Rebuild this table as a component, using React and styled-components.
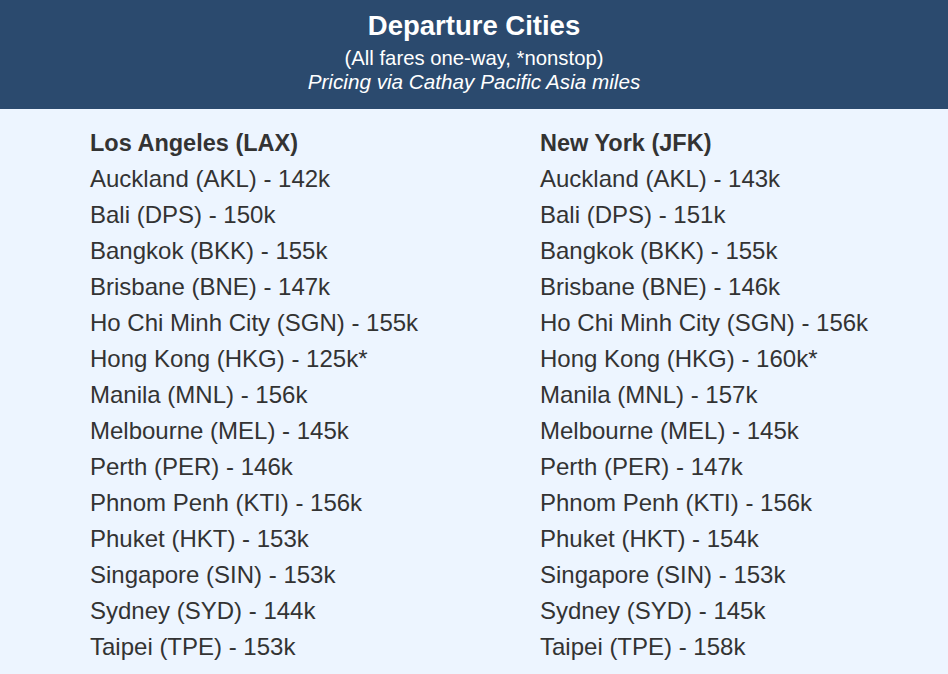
import React from 'react';
import styled, { createGlobalStyle } from 'styled-components';

const departures = [
  {
    id: 'lax',
    city: 'Los Angeles (LAX)',
    fares: [
      'Auckland (AKL) - 142k',
      'Bali (DPS) - 150k',
      'Bangkok (BKK) - 155k',
      'Brisbane (BNE) - 147k',
      'Ho Chi Minh City (SGN) - 155k',
      'Hong Kong (HKG) - 125k*',
      'Manila (MNL) - 156k',
      'Melbourne (MEL) - 145k',
      'Perth (PER) - 146k',
      'Phnom Penh (KTI) - 156k',
      'Phuket (HKT) - 153k',
      'Singapore (SIN) - 153k',
      'Sydney (SYD) - 144k',
      'Taipei (TPE) - 153k',
    ],
  },
  {
    id: 'jfk',
    city: 'New York (JFK)',
    fares: [
      'Auckland (AKL) - 143k',
      'Bali (DPS) - 151k',
      'Bangkok (BKK) - 155k',
      'Brisbane (BNE) - 146k',
      'Ho Chi Minh City (SGN) - 156k',
      'Hong Kong (HKG) - 160k*',
      'Manila (MNL) - 157k',
      'Melbourne (MEL) - 145k',
      'Perth (PER) - 147k',
      'Phnom Penh (KTI) - 156k',
      'Phuket (HKT) - 154k',
      'Singapore (SIN) - 153k',
      'Sydney (SYD) - 145k',
      'Taipei (TPE) - 158k',
    ],
  },
];

const App = () => {
  return (
    <>
      <GlobalStyle />
      <Page>
        <Header>
          <Title>Departure Cities</Title>
          <Subtitle>(All fares one-way, *nonstop)</Subtitle>
          <Subtitle italic>Pricing via Cathay Pacific Asia miles</Subtitle>
        </Header>

        <Columns>
          {departures.map((dep) => (
            <Column key={dep.id}>
              <CityHeading>{dep.city}</CityHeading>
              {dep.fares.map((fare) => (
                <FareRow key={fare}>{fare}</FareRow>
              ))}
            </Column>
          ))}
        </Columns>
      </Page>
    </>
  );
};

export default App;

const GlobalStyle = createGlobalStyle`
  html, body {
    margin: 0;
    padding: 0;
    background-color: #edf5ff;
  }
`;

const Page = styled.div`
  font-family: 'Liberation Sans', Arial, sans-serif;
  width: 948px;
  min-height: 674px;
  background-color: #edf5ff;
  color: #333333;
`;

const Header = styled.header`
  background-color: #2b4a6e;
  color: #ffffff;
  text-align: center;
  padding: 6px 0 15px;
`;

const Title = styled.h1`
  margin: 0;
  font-size: 27.5px;
  line-height: 40px;
  font-weight: 700;
`;

const Subtitle = styled.div`
  font-size: ${(p) => (p.italic ? '20.7px' : '20.3px')};
  line-height: 24px;
  font-style: ${(p) => (p.italic ? 'italic' : 'normal')};
`;

const Columns = styled.div`
  display: grid;
  grid-template-columns: 450px 450px;
  padding: 16px 0 0 90px;
`;

const Column = styled.div`
  display: flex;
  flex-direction: column;
`;

const CityHeading = styled.div`
  font-size: 23.5px;
  line-height: 36px;
  font-weight: 700;
`;

const FareRow = styled.div`
  font-size: 24px;
  line-height: 36px;
`;
